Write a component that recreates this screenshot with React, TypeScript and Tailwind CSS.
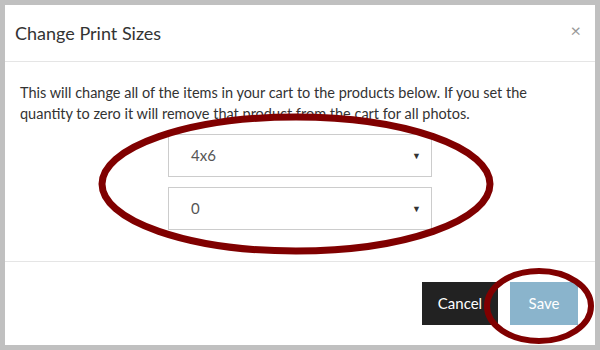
export default function App() {
  return (
    <div className="relative w-[600px] h-[350px] bg-[#c0c0c0] p-[5px] overflow-hidden" style={{ fontFamily: 'Lato, "Open Sans", sans-serif' }}>
      <div className="w-[590px] h-[340px] bg-white flex flex-col text-[#333]">
        <div className="h-[57px] border-b border-[#e5e5e5] flex items-center justify-between pl-[10px] pr-[14px]">
          <h4 className="text-[18px] leading-none">Change Print Sizes</h4>
          <span className="text-[#999] text-[18px] leading-none -mt-[6px]">×</span>
        </div>
        <div className="h-[200px] border-b border-[#e5e5e5] pt-[20px] px-[15px]">
          <p className="text-[14.5px] leading-[21px]">
            This will change all of the items in your cart to the products below. If you set the quantity to zero it will remove that product from the cart for all photos.
          </p>
          <div className="flex flex-col items-center gap-[10px] mt-[10px]">
            <div className="w-[264px] h-[43px] border border-[#ccc] flex items-center justify-between pl-[22px] pr-[10px]">
              <span className="text-[15px] text-[#555]">4x6</span>
              <span className="text-[9px] text-[#333]">▼</span>
            </div>
            <div className="w-[264px] h-[43px] border border-[#ccc] flex items-center justify-between pl-[22px] pr-[10px]">
              <span className="text-[15px] text-[#555]">0</span>
              <span className="text-[9px] text-[#333]">▼</span>
            </div>
          </div>
        </div>
        <div className="flex justify-end gap-[12px] pt-[20px] pr-[17px]">
          <button className="w-[76px] h-[43px] bg-[#222] text-white text-[15px]">Cancel</button>
          <button className="w-[68px] h-[43px] bg-[#8ab4cc] text-white text-[15px]">Save</button>
        </div>
      </div>
      <svg className="absolute inset-0 pointer-events-none" width="600" height="350">
        <ellipse cx="296" cy="184" rx="194" ry="67" fill="none" stroke="#800000" strokeWidth="7" />
        <ellipse cx="539" cy="306" rx="52" ry="35" fill="none" stroke="#800000" strokeWidth="6" />
      </svg>
    </div>
  );
}
